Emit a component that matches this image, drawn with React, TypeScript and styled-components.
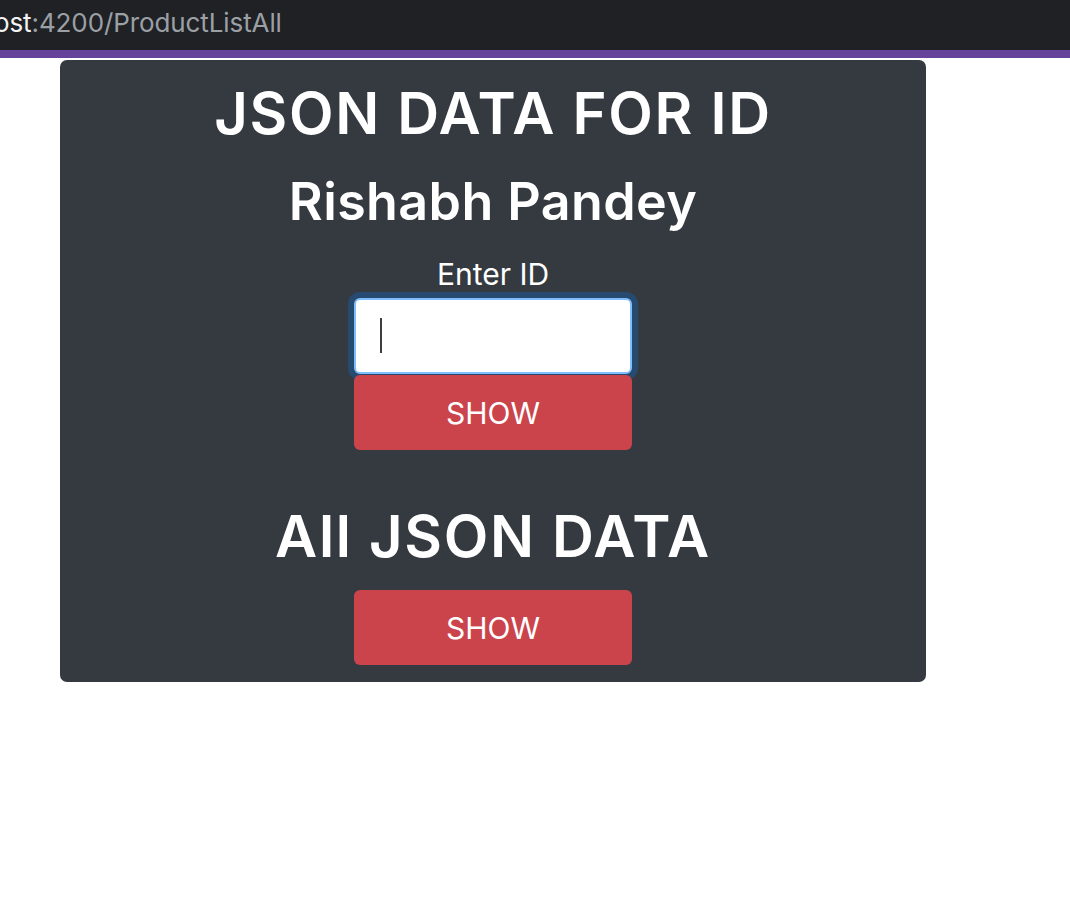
import React from "react";
import styled, { createGlobalStyle } from "styled-components";

const Global = createGlobalStyle`
  html, body { margin: 0; padding: 0; background: #ffffff; }
  body { font-family: Inter, "Noto Sans", Roboto, sans-serif; }
  * { box-sizing: border-box; }
`;

const AddressBar = styled.div`
  height: 50px;
  background: #202124;
  display: flex;
  align-items: center;
  padding-bottom: 6px;
  overflow: hidden;
  font-size: 26px;
  letter-spacing: -0.1px;
  white-space: nowrap;
`;

const Host = styled.span`
  color: #f1f3f4;
  margin-left: -6px;
`;

const Path = styled.span`
  color: #9aa0a6;
`;

const AccentStrip = styled.div`
  height: 8px;
  background: #66439b;
`;

const Page = styled.main`
  padding: 2px 0 0 60px;
`;

const Card = styled.section`
  width: 866px;
  background: #343a40;
  border-radius: 7px;
  padding: 24px 0 17px;
  display: flex;
  flex-direction: column;
  align-items: center;
  color: #ffffff;
`;

const Title = styled.h1<{ $gap?: number }>`
  margin: ${(p) => p.$gap ?? 0}px 0 0;
  font-size: 58px;
  line-height: 58px;
  font-weight: 600;
  letter-spacing: 1.7px;
`;

const Subtitle = styled.h2`
  margin: 34px 0 0;
  font-size: 52px;
  line-height: 52px;
  font-weight: 600;
  letter-spacing: 0.4px;
`;

const Label = styled.label`
  margin-top: 31px;
  font-size: 30px;
  line-height: 30px;
  font-weight: 400;
`;

const Field = styled.div`
  position: relative;
  margin-top: 9px;
  width: 278px;
  height: 76px;
`;

const Input = styled.input`
  display: block;
  width: 100%;
  height: 100%;
  border: 2px solid #80bdff;
  border-radius: 6px;
  background: #ffffff;
  box-shadow: 0 0 0 6px rgba(0, 123, 255, 0.25);
  outline: none;
  padding: 0 24px;
  font-family: inherit;
  font-size: 30px;
  color: #495057;
`;

const Caret = styled.span`
  position: absolute;
  left: 26px;
  top: 20px;
  width: 2px;
  height: 35px;
  background: #3c4043;
`;

const Button = styled.button<{ $gap?: number }>`
  position: relative;
  margin-top: ${(p) => p.$gap ?? 0}px;
  width: 278px;
  height: 75px;
  border: none;
  border-radius: 6px;
  background: #cb444c;
  color: #ffffff;
  font-family: inherit;
  font-size: 30px;
  font-weight: 400;
  cursor: pointer;
`;

export default function App() {
  return (
    <>
      <Global />
      <AddressBar>
        <Host>ost</Host>
        <Path>:4200/ProductListAll</Path>
      </AddressBar>
      <AccentStrip />
      <Page>
        <Card>
          <Title>JSON DATA FOR ID</Title>
          <Subtitle>Rishabh Pandey</Subtitle>
          <Label htmlFor="id">Enter ID</Label>
          <Field>
            <Input id="id" type="text" />
            <Caret />
          </Field>
          <Button $gap={1}>SHOW</Button>
          <Title $gap={57}>All JSON DATA</Title>
          <Button $gap={25}>SHOW</Button>
        </Card>
      </Page>
    </>
  );
}
